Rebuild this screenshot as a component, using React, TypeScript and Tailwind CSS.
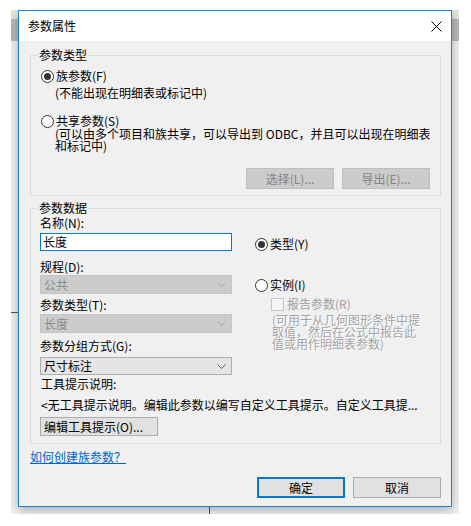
import React from 'react'

function Radio({ checked }: { checked?: boolean }) {
  return (
    <span className="flex h-[13px] w-[13px] shrink-0 items-center justify-center rounded-full border border-[#333333] bg-white">
      {checked && <span className="h-[7px] w-[7px] rounded-full bg-[#333333]" />}
    </span>
  )
}

function Chevron({ color }: { color: string }) {
  return (
    <svg width="9" height="5" viewBox="0 0 9 5" className="shrink-0">
      <path d="M0.5 0.5 L4.5 4.5 L8.5 0.5" fill="none" stroke={color} strokeWidth="1" />
    </svg>
  )
}

function Select({ value, disabled, h }: { value: string; disabled?: boolean; h: string }) {
  return (
    <div
      className={
        disabled
          ? `flex ${h} w-[192px] items-center justify-between border border-[#c4c4c4] bg-[#cccccc] pl-[3px] pr-[5px] text-[#8a8a8a]`
          : `flex ${h} w-[192px] items-center justify-between border border-[#adadad] bg-[#e5e5e5] pl-[3px] pr-[5px] text-black`
      }
    >
      <span className="leading-[14px]">{value}</span>
      <Chevron color={disabled ? '#a6a6a6' : '#606060'} />
    </div>
  )
}

export default function App() {
  return (
    <div className="relative h-[526px] w-[471px] overflow-hidden bg-white font-['Noto_Sans_CJK_SC',sans-serif] text-[12px] text-black">
      {/* desktop behind the dialog */}
      <div className="absolute left-[11px] top-[10px] flex h-[504px] w-[448px] flex-col overflow-hidden bg-[#f2f2f2]">
        <div className="h-[9px] bg-[#e2e9d8]" />
        <div className="h-[22px] bg-[#b9b9b9]" />
        <div className="absolute left-0 top-[302px] h-[1px] w-[8px] bg-[#356b35]" />
        <div className="absolute left-[198px] top-[497px] h-[7px] w-[1px] bg-[#356b35]" />

        <div className="absolute left-[7px] top-0 flex h-[497px] w-[434px] flex-col border border-[#1883d7] bg-[#f0f0f0] shadow-[0_3px_10px_rgba(0,0,0,0.3)]">
          {/* title bar */}
          <div className="flex h-[30px] items-center justify-between bg-white pl-[9px] pr-[9px]">
            <span className="leading-[14px]">参数属性</span>
            <svg width="11" height="11" viewBox="0 0 11 11">
              <path d="M0.5 0.5 L10.5 10.5 M10.5 0.5 L0.5 10.5" stroke="#000" strokeWidth="1" />
            </svg>
          </div>

          <div className="flex flex-1 flex-col pl-[11px] pr-[10px]">
            {/* 参数类型 */}
            <div className="relative mt-[14px] h-[141px] border border-[#dcdcdc]">
              <span className="absolute -top-[8px] left-[7px] bg-[#f0f0f0] px-[1px] leading-[14px]">参数类型</span>
              <div className="mt-[13px] flex h-[14px] items-center gap-[2px] pl-[10px]">
                <Radio checked />
                <span className="leading-[14px]">族参数(F)</span>
              </div>
              <div className="mt-[3px] pl-[24px] leading-[14px]">(不能出现在明细表或标记中)</div>
              <div className="mt-[14px] flex h-[14px] items-center gap-[2px] pl-[10px]">
                <Radio />
                <span className="leading-[14px]">共享参数(S)</span>
              </div>
              <div className="whitespace-nowrap pl-[24px] leading-[12px]">
                (可以由多个项目和族共享，可以导出到 ODBC，并且可以出现在明细表
                <br />
                和标记中)
              </div>
              <div className="mt-[16px] flex justify-end gap-[8px] pr-[10px]">
                <div className="flex h-[21px] w-[88px] items-center justify-center border border-[#bfbfbf] bg-[#cccccc] text-[#838383]">
                  选择(L)...
                </div>
                <div className="flex h-[21px] w-[88px] items-center justify-center border border-[#bfbfbf] bg-[#cccccc] text-[#838383]">
                  导出(E)...
                </div>
              </div>
            </div>

            {/* 参数数据 */}
            <div className="relative mt-[12px] h-[236px] border border-[#dcdcdc]">
              <span className="absolute -top-[8px] left-[7px] bg-[#f0f0f0] px-[1px] leading-[14px]">参数数据</span>
              <div className="flex pl-[9px]">
                <div className="flex w-[192px] flex-col">
                  <span className="mt-[7px] h-[14px] leading-[14px]">名称(N):</span>
                  <div className="mt-[3px] flex h-[18px] items-center border border-[#0078d7] bg-white pl-[2px]">
                    <span className="leading-[14px]">长度</span>
                  </div>
                  <span className="mt-[9px] h-[14px] leading-[14px]">规程(D):</span>
                  <div className="mt-[1px]">
                    <Select value="公共" disabled h="h-[19px]" />
                  </div>
                  <span className="mt-[4px] h-[14px] leading-[14px]">参数类型(T):</span>
                  <div className="mt-[2px]">
                    <Select value="长度" disabled h="h-[19px]" />
                  </div>
                  <span className="mt-[6px] h-[14px] leading-[14px]">参数分组方式(G):</span>
                  <div className="mt-[4px]">
                    <Select value="尺寸标注" h="h-[18px]" />
                  </div>
                </div>

                <div className="ml-[23px] flex flex-col">
                  <div className="mt-[28px] flex h-[14px] items-center gap-[2px]">
                    <Radio checked />
                    <span className="leading-[14px]">类型(Y)</span>
                  </div>
                  <div className="mt-[27px] flex h-[14px] items-center gap-[2px]">
                    <Radio />
                    <span className="leading-[14px]">实例(I)</span>
                  </div>
                  <div className="ml-[16px] mt-[5px] flex h-[14px] items-center gap-[3px]">
                    <span className="h-[13px] w-[13px] border border-[#c6c6c6] bg-[#f4f4f4]" />
                    <span className="leading-[14px] text-[#a0a0a0]">报告参数(R)</span>
                  </div>
                  <div className="ml-[17px] mt-[3px] whitespace-nowrap leading-[12px] text-[#a3a3a3] [text-shadow:1px_1px_0_#ffffff]">
                    (可用于从几何图形条件中提
                    <br />
                    取值，然后在公式中报告此
                    <br />
                    值或用作明细表参数)
                  </div>
                </div>
              </div>

              <div className="pl-[10px]">
                <div className="mt-[2px] h-[14px] leading-[14px]">工具提示说明:</div>
                <div className="mt-[7px] h-[14px] whitespace-nowrap leading-[14px]">
                  &lt;无工具提示说明。编辑此参数以编写自定义工具提示。自定义工具提...
                </div>
                <div className="-ml-[1px] mt-[5px] flex h-[19px] w-[118px] items-center border border-[#adadad] bg-[#e1e1e1] pl-[3px]">
                  <span className="leading-[14px]">编辑工具提示(O)...</span>
                </div>
              </div>
            </div>

            <div className="mt-[6px] h-[14px] leading-[14px]">
              <span className="text-[#0066cc] underline">如何创建族参数？</span>
            </div>

            <div className="mt-[13px] flex justify-end gap-[8px]">
              <div className="flex h-[21px] w-[88px] items-center justify-center border-2 border-[#0078d7] bg-[#e1e1e1]">
                确定
              </div>
              <div className="flex h-[21px] w-[88px] items-center justify-center border border-[#adadad] bg-[#e1e1e1]">
                取消
              </div>
            </div>
          </div>
        </div>
      </div>
    </div>
  )
}
